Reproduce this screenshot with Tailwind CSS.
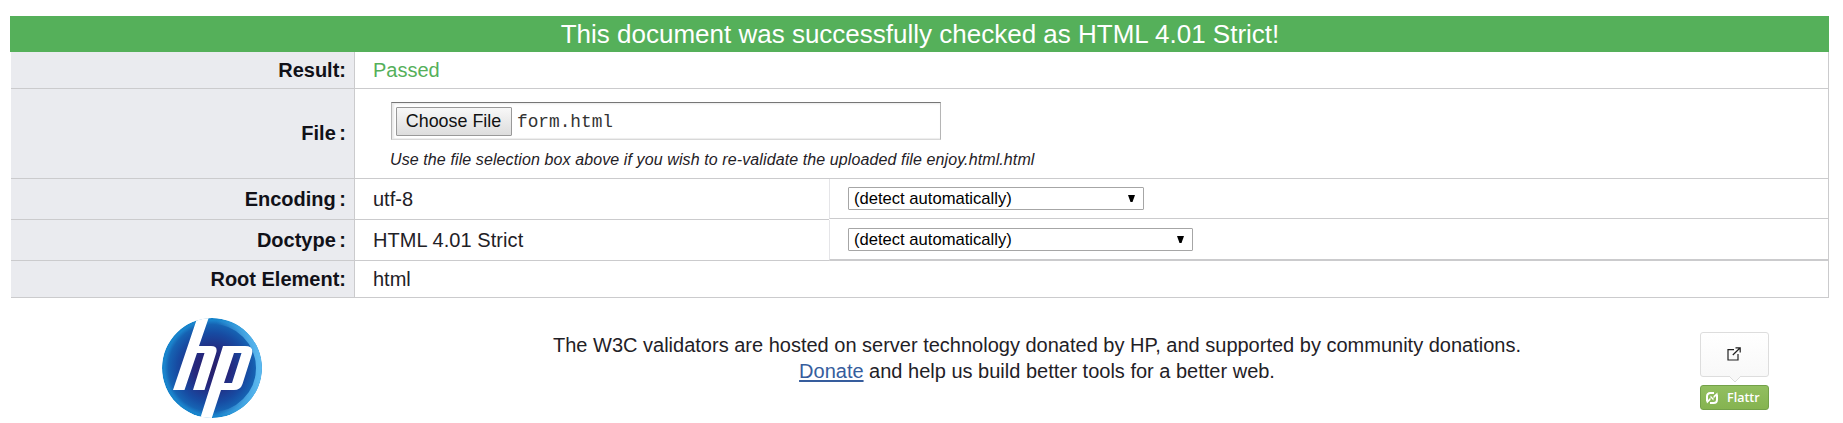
<!DOCTYPE html>
<html lang="en">
<head>
<meta charset="utf-8">
<title>Markup Validation</title>
<script src="https://cdn.jsdelivr.net/npm/@tailwindcss/browser@4"></script>
</head>
<body class="h-[423px] overflow-hidden bg-white pt-4 pr-3.5 pl-2.5 font-['Liberation_Sans',sans-serif] text-[20px] leading-[26px] text-[#1f2126]">
<main>
  <h2 class="flex h-9 items-center justify-center pl-px text-[26px] text-white bg-[#55b05a]">This document was successfully checked as HTML 4.01 Strict!</h2>
  <section class="ml-px grid grid-cols-[344px_1fr] grid-rows-[37px_90px_41px_41px_37px] border-r border-[#cbcbcd]">
    <div class="flex items-center justify-end border-r border-b border-[#cbcbcd] bg-[#eaebef] pr-2 font-bold text-[#111118]">Result:</div>
    <div class="flex items-center border-b border-[#cbcbcd] pl-[18px] text-[#55b05a]">Passed</div>

    <div class="flex items-center justify-end border-r border-b border-[#cbcbcd] bg-[#eaebef] pr-2 pb-0.5 font-bold [word-spacing:-2px] text-[#111118]">File :</div>
    <div class="border-b border-[#cbcbcd] pt-[13px] pl-9">
      <div class="flex h-[38px] w-[550px] items-center border border-t-[#767676] border-r-[#b5b5b5] border-b-[#d8d8d8] border-l-[#b5b5b5] pl-1 shadow-[inset_2px_1px_2px_#e9e9e9,inset_0_-1px_1px_#eeeeee]">
        <button class="h-[29px] w-[116px] rounded-[1px] border border-[#999999] bg-linear-to-b from-[#f8f8f8] to-[#dddddd] pr-px text-[17.9px] leading-[26px] whitespace-nowrap text-[#111111]">Choose File</button>
        <span class="pt-0.5 pl-[5px] font-['Liberation_Mono',monospace] text-[17.8px] text-[#333333]">form.html</span>
      </div>
      <p class="-ml-px pt-[7px] text-[16px] tracking-[0.105px] italic">Use the file selection box above if you wish to re-validate the uploaded file enjoy.html.html</p>
    </div>

    <div class="flex items-center justify-end border-r border-b border-[#cbcbcd] bg-[#eaebef] pr-2 font-bold [word-spacing:-2px] text-[#111118]">Encoding :</div>
    <div class="grid grid-cols-[474px_1fr]">
      <div class="flex items-center border-b border-[#cbcbcd] pl-[18px]">utf-8</div>
      <div class="h-10 border-b border-l border-b-[#cbcbcd] border-l-[#e5e5e8] pt-2 pl-[18px]">
        <div class="flex h-[23px] w-[296px] items-center justify-between rounded-[1px] border border-[#a6a6a6] pr-2 pl-[5px] text-[16.6px] text-black"><span>(detect automatically)</span><svg class="h-[7px] w-[7px]" viewBox="0 0 7 7"><path d="M0 0h7L4.5 7h-2z"/></svg></div>
      </div>
    </div>

    <div class="flex items-center justify-end border-r border-b border-[#cbcbcd] bg-[#eaebef] pr-2 font-bold [word-spacing:-2px] text-[#111118]">Doctype :</div>
    <div class="grid grid-cols-[474px_1fr]">
      <div class="flex items-center border-b border-[#cbcbcd] pl-[18px] tracking-[0.06px]">HTML 4.01 Strict</div>
      <div class="border-b-2 border-l border-b-[#cbcbcd] border-l-[#e5e5e8] pt-2 pl-[18px]">
        <div class="flex h-[23px] w-[345px] items-center justify-between rounded-[1px] border border-[#a6a6a6] pr-2 pl-[5px] text-[16.6px] text-black"><span>(detect automatically)</span><svg class="h-[7px] w-[7px]" viewBox="0 0 7 7"><path d="M0 0h7L4.5 7h-2z"/></svg></div>
      </div>
    </div>

    <div class="flex items-center justify-end border-r border-b border-[#cbcbcd] bg-[#eaebef] pr-2 font-bold text-[#111118]">Root Element:</div>
    <div class="flex items-center border-b border-[#cbcbcd] pl-[18px]">html</div>
  </section>
</main>
<footer class="flex items-start">
  <svg class="mt-5 ml-[152px] h-[100px] w-[100px] shrink-0" viewBox="0 0 100 100" role="img" aria-label="HP">
    <defs>
      <radialGradient id="orb" cx=".5" cy=".5" r=".5"><stop offset="0" stop-color="#28206a"/><stop offset=".35" stop-color="#25277d"/><stop offset=".7" stop-color="#174ba2"/><stop offset=".87" stop-color="#1663b3"/><stop offset=".95" stop-color="#1b83cc"/><stop offset="1" stop-color="#1283ca"/></radialGradient>
      <linearGradient id="shine" x1="0" y1=".5" x2="1" y2=".5"><stop offset=".55" stop-color="#55b7ee" stop-opacity="0"/><stop offset="1" stop-color="#5bb8ef"/></linearGradient>
      <clipPath id="disc"><circle cx="50" cy="50" r="50"/></clipPath>
    </defs>
    <g clip-path="url(#disc)">
      <circle cx="50" cy="50" r="50" fill="url(#orb)"/>
      <circle cx="50" cy="50" r="47" fill="none" stroke="url(#shine)" stroke-width="6"/>
      <path fill="#fff" d="M35.5 -1H47L37 28H49Q56.500 28 54 35.500L42.500 72H31L42.500 35H35L22.500 72H11Z"/>
      <path fill="#fff" d="M61 28H83Q92 28 90 36L80.500 66Q78.500 72 72 72H59L49.500 101H38ZM72 35L62 65H70L79.500 35Z" fill-rule="evenodd"/>
    </g>
  </svg>
  <p class="mt-[34px] ml-[291px] w-[968px] text-center whitespace-nowrap">The W3C validators are hosted on server technology donated by HP, and supported by community donations.<br><a class="text-[#365d9d] underline decoration-2 underline-offset-2" href="#">Donate</a> and help us build better tools for a better web.</p>
  <div class="mt-[34px] ml-[179px] w-[69px] shrink-0">
    <div class="relative flex h-[45px] items-center justify-center rounded-[3px] border border-[#dddddd] bg-linear-to-b from-white to-[#f8f8f8] pr-px pb-px">
      <svg class="h-[14px] w-[14px]" viewBox="0 0 14 14" fill="none" stroke="#222" stroke-width="1.2"><path d="M7 2.6H1V13h10V7M5.8 8L13 1M8.5.8H13.2V5.5"/></svg>
      <svg class="absolute top-[43px] left-[28px] h-[7px] w-3" viewBox="0 0 12 7"><path d="M0 0L6 6L12 0" fill="#f8f8f8" stroke="#dddddd"/></svg>
    </div>
    <div class="mt-2 flex h-[25px] items-center rounded-[3px] border border-[#73a149] bg-linear-to-b from-[#92bf60] to-[#85b350] pl-[5px] text-white">
      <svg class="h-3 w-3" viewBox="0 0 12 12" fill="none" stroke="#fff"><path stroke-width="2" d="M1 9.500V4.500Q1 1 4.500 1H8M11 2.500V7.500Q11 11 7.500 11H4"/><path fill="#fff" stroke="none" d="M1 11.500L4.500 8V3.500L7.500 6.500L11.500 2.500V.5L7.500 4V8.500L4.500 5.500L.5 9.500Z"/></svg>
      <span class="ml-[9px] font-['Open_Sans',sans-serif] text-[12.5px] leading-[23px] font-semibold">Flattr</span>
    </div>
  </div>
</footer>
</body>
</html>
